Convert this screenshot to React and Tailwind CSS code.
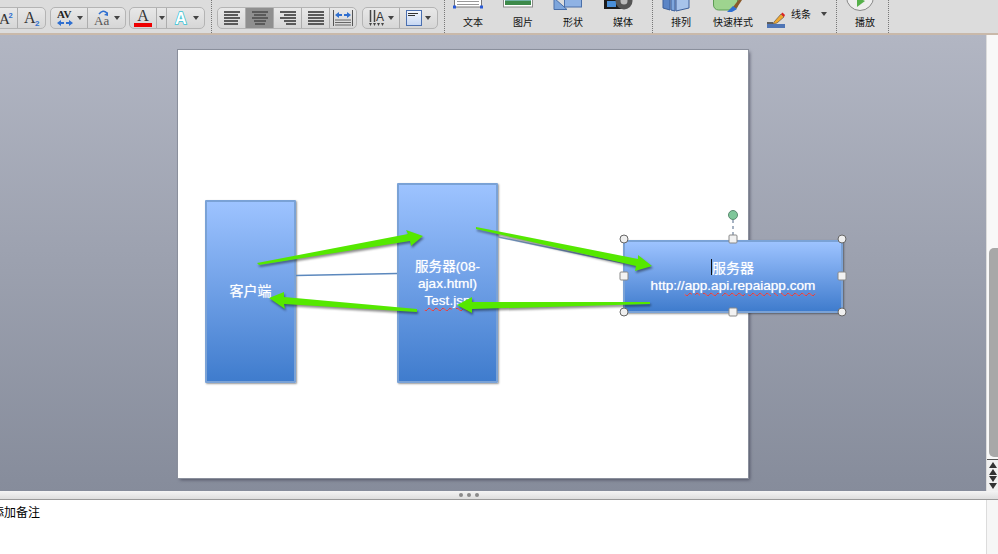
import React from 'react';

// one segmented button in the ribbon
const Seg = ({ w, active, children }) => (
    <div className={`flex h-full shrink-0 items-center justify-center border-r border-[#adadad] last:border-r-0 ${active ? 'bg-[#8f8f8f]' : ''}`} style={{ width: w }}>
        {children}
    </div>
);

const Group = ({ children, className = '' }) => (
    <div className={`mt-[7px] flex h-[22px] shrink-0 items-center overflow-hidden rounded-[5px] border border-[#b4b4b4] bg-gradient-to-b from-[#e8e8e8] to-[#d6d6d6] ${className}`}>
        {children}
    </div>
);

const Caret = ({ className = 'ml-[3px]' }) => <span className={`h-0 w-0 border-x-[3px] border-t-[4px] border-x-transparent border-t-[#444] ${className}`}></span>;

const Sep = ({ className = '' }) => <div className={`h-[33px] w-0 shrink-0 border-l border-dotted border-[#777] ${className}`}></div>;

// little text lines used by the paragraph buttons
const Lines = ({ rows, align }) => (
    <div className={`flex w-[16px] flex-col gap-[1px] ${align}`}>
        {rows.map((r, i) => (
            <div key={i} className="h-[2px] bg-[#5a5a5a]" style={{ width: r }}></div>
        ))}
    </div>
);

const DoubleArrow = ({ x, y }) => (
    <g fill="#2f6fd0">
        <path d={`M${x} ${y}l4-3v2h3v2h-3v2z`} />
        <path d={`M${x + 16} ${y}l-4-3v2h-3v2h3v2z`} />
    </g>
);

// icon is cropped by the window top, and sits 5px left of its label
const InsertItem = ({ w, label, children }) => (
    <div className="flex h-[33px] shrink-0 flex-col items-center" style={{ width: w }}>
        <div className="flex h-[15px] w-full items-start justify-center overflow-hidden pr-[10px]">{children}</div>
        <div className="text-[10px] leading-[14px] text-[#111]">{label}</div>
    </div>
);

const Toolbar = () => (
    <div className="flex h-[33px] shrink-0 items-start overflow-hidden bg-[#dcdcdc] font-['Liberation_Serif','Noto_Sans_CJK_SC',serif]">
        <Group className="-ml-px w-[47px] rounded-l-none">
            <Seg w={18}>
                <svg width="18" height="20" viewBox="0 0 18 20">
                    <text x="-1" y="16" fontSize="16" fill="#333">A</text>
                    <text x="9" y="10" fontSize="8" fontWeight="bold" fill="#2f6fd0" fontFamily="Liberation Sans">2</text>
                </svg>
            </Seg>
            <Seg w={27}>
                <svg width="27" height="20" viewBox="0 0 27 20">
                    <text x="6" y="15" fontSize="16" fill="#333">A</text>
                    <text x="17" y="18" fontSize="8" fontWeight="bold" fill="#2f6fd0" fontFamily="Liberation Sans">2</text>
                </svg>
            </Seg>
        </Group>
        <Group className="ml-[4px] w-[76px]">
            <Seg w={37}>
                <svg width="18" height="20" viewBox="0 0 18 20">
                    <text x="1" y="10" fontSize="11" fontWeight="bold" fill="#222">AV</text>
                    <DoubleArrow x={1} y={15} />
                </svg>
                <Caret />
            </Seg>
            <Seg w={37}>
                <svg width="18" height="20" viewBox="0 0 18 20">
                    <text x="1" y="17" fontSize="13" fill="#555">Aa</text>
                    <path d="M6 6q4-5 8-1" fill="none" stroke="#2f6fd0" strokeWidth="1.5" />
                    <path d="M15 8l-4-1 4-3z" fill="#2f6fd0" />
                </svg>
                <Caret />
            </Seg>
        </Group>
        <Group className="ml-[3px] w-[76px]">
            <Seg w={27}>
                <div className="flex flex-col items-center">
                    <span className="text-[16px] leading-[13px] text-[#333]">A</span>
                    <div className="mt-[1px] h-[4px] w-[18px] bg-[#ee0000]"></div>
                </div>
            </Seg>
            <Seg w={10}>
                <Caret className="" />
            </Seg>
            <Seg w={37}>
                <svg width="17" height="18" viewBox="0 0 17 18">
                    <text x="2" y="15" fontSize="16" fontWeight="bold" fontFamily="Liberation Sans" fill="#fff" stroke="#37c4d6" strokeWidth="1.5" paintOrder="stroke">A</text>
                </svg>
                <Caret />
            </Seg>
        </Group>
        <Sep className="ml-[6px]" />
        <Group className="ml-[5px] w-[140px]">
            <Seg w={28}><Lines rows={[16, 14, 16, 14, 14]} align="items-start" /></Seg>
            <Seg w={28} active><Lines rows={[16, 12, 16, 12, 10]} align="items-center" /></Seg>
            <Seg w={28}><Lines rows={[16, 12, 16, 12, 10]} align="items-end" /></Seg>
            <Seg w={28}><Lines rows={[16, 16, 16, 16, 16]} align="items-center" /></Seg>
            <Seg w={26}>
                <svg width="20" height="18" viewBox="0 0 20 18">
                    <path d="M0.5 1v16M19.5 1v16" stroke="#555" />
                    <DoubleArrow x={2} y={6} />
                    <path d="M2 11h16M2 13.5h16M2 16h16" stroke="#666" />
                </svg>
            </Seg>
        </Group>
        <Group className="ml-[5px] w-[76px]">
            <Seg w={37}>
                <svg width="17" height="20" viewBox="0 0 17 20">
                    <path d="M2.5 2v12M6.5 2v12" stroke="#444" strokeWidth="1.5" />
                    <text x="8" y="13" fontSize="12" fontFamily="Liberation Sans" fill="#333">A</text>
                    <path d="M1 15h3l-1.5 3zM5 15h3l-1.5 3zM9 15h3l-1.5 3zM13 15h3l-1.5 3z" fill="#444" />
                </svg>
                <Caret />
            </Seg>
            <Seg w={37}>
                <div className="flex h-[16px] w-[16px] flex-col gap-[1px] border border-[#4a6fb0] bg-gradient-to-b from-[#f4f7fd] to-[#c6d7f3] px-[1px] pt-[2px]">
                    <div className="h-px w-[10px] bg-[#333]"></div>
                    <div className="h-px w-[7px] bg-[#333]"></div>
                </div>
                <Caret />
            </Seg>
        </Group>
        <Sep className="ml-[6px]" />
        <div className="ml-[3px] flex font-['Noto_Sans_CJK_SC',sans-serif]">
            <InsertItem w={50} label="文本">
                <svg width="30" height="15" viewBox="0 0 30 15">
                    <rect x="1.5" y="-6" width="27" height="13" fill="#fff" stroke="#777" />
                    <path d="M4 1.5h22M4 4.5h22" stroke="#999" />
                    <rect x="0" y="5.5" width="3" height="3" fill="#2a5bd7" />
                    <rect x="27" y="5.5" width="3" height="3" fill="#2a5bd7" />
                </svg>
            </InsertItem>
            <InsertItem w={50} label="图片">
                <svg width="30" height="15" viewBox="0 0 30 15">
                    <rect x="0.5" y="-6" width="29" height="13" fill="#fff" stroke="#8a8a8a" />
                    <rect x="2" y="-4" width="26" height="9" fill="#3d8a4a" />
                    <rect x="2" y="-4" width="26" height="5" fill="#6fb1a4" />
                </svg>
            </InsertItem>
            <InsertItem w={50} label="形状">
                <svg width="30" height="15" viewBox="0 0 30 15">
                    <path d="M1 -2 L14 9.5 H1 Z" fill="#7ea6dc" stroke="#4a6fa8" />
                    <rect x="11.5" y="-4" width="17" height="11" fill="#8fb2e4" stroke="#4a6fa8" />
                </svg>
            </InsertItem>
            <InsertItem w={50} label="媒体">
                <svg width="30" height="15" viewBox="0 0 30 15">
                    <rect x="1" y="-2" width="18" height="11" fill="#1c1c1c" />
                    <rect x="4" y="1" width="9" height="6" fill="#4a8fd8" />
                    <circle cx="21" cy="1" r="8.5" fill="#555" />
                    <circle cx="21" cy="1" r="3.5" fill="#bbb" />
                </svg>
            </InsertItem>
        </div>
        <Sep className="ml-[4px]" />
        <div className="ml-[3px] flex font-['Noto_Sans_CJK_SC',sans-serif]">
            <InsertItem w={50} label="排列">
                <svg width="30" height="15" viewBox="0 0 30 15">
                    <path d="M2 -2 L9 -2 L9 10 L2 8Z" fill="#5b85c6" stroke="#3c5f9a" />
                    <path d="M10 -2 L14 -2 L14 11 L10 10Z" fill="#7ea6dc" stroke="#3c5f9a" />
                    <path d="M15 11 L28 8 L28 -2 L15 -2Z" fill="#a7c3ea" stroke="#3c5f9a" />
                </svg>
            </InsertItem>
            <InsertItem w={54} label="快速样式">
                <svg width="30" height="15" viewBox="0 0 30 15">
                    <rect x="0.5" y="-8" width="24" height="18" rx="5" fill="#9ed48f" stroke="#5d9c54" />
                    <path d="M20 7 L27 -2 L29 0 L23 9Z" fill="#8a5a2b" />
                    <path d="M14 12 L20 6 L24 9 L19 12Z" fill="#2f6fd0" />
                </svg>
            </InsertItem>
            <div className="ml-[7px] flex h-[28px] shrink-0 items-center">
                <svg className="self-end" width="18" height="20" viewBox="0 0 18 20">
                    <path d="M0 15 H6" stroke="#333" strokeWidth="1.5" />
                    <path d="M7 14 L14 6 L17 9 L10 15 L6 16Z" fill="#f0a830" stroke="#333" strokeWidth="0.5" />
                    <path d="M14 6 L15.5 4.5 L18 7 L17 9Z" fill="#d22" />
                    <rect x="0" y="16" width="18" height="4" fill="#4f75b5" />
                </svg>
                <span className="ml-[6px] text-[10px] leading-none text-[#111]">线条</span>
                <Caret className="ml-[10px]" />
            </div>
        </div>
        <Sep className="ml-[9px]" />
        <div className="ml-[3px] font-['Noto_Sans_CJK_SC',sans-serif]">
            <InsertItem w={50} label="播放">
                <svg width="30" height="15" viewBox="0 0 30 15">
                    <circle cx="15" cy="-3" r="13.5" fill="#eee" stroke="#888" />
                    <path d="M12 -3 L20 1 L12 7Z" fill="#55b04a" />
                </svg>
            </InsertItem>
        </div>
        <Sep className="-ml-[2px]" />
    </div>
);

const Arrow = ({ points }) => (
    <polygon points={points} fill="#55e800" className="drop-shadow-[1px_2px_1px_rgba(0,0,0,0.45)]" />
);

const Round = ({ x, y }) => <circle cx={x} cy={y} r="4" fill="#efefef" stroke="#666" />;
const Square = ({ x, y }) => <rect x={x - 4} y={y - 4} width="8" height="8" rx="1" fill="#f2f2f2" stroke="#888" />;

const boxStyle = "absolute flex items-center justify-center rounded-[1px] border-2 border-[#7aa2d6] bg-gradient-to-b from-[#9dc3ff] to-[#3f7ccd] text-center text-white shadow-[1px_1px_2px_rgba(0,0,0,0.4)] [text-shadow:0_0_1px_rgba(255,255,255,0.7)]";
const squiggle = 'underline decoration-wavy decoration-[#e02020] decoration-1 underline-offset-2';

const Slide = () => (
    <div className="relative mt-[15px] ml-[178px] h-[428px] w-[570px] bg-white shadow-[0_0_0_1px_#8a8f9c,2px_2px_3px_rgba(40,40,60,0.55)] font-['Liberation_Sans','Noto_Sans_CJK_SC',sans-serif]">
        {/* 客户端 */}
        <div className={`${boxStyle} top-[150px] left-[27px] h-[183px] w-[91px] text-[14px]`}>客户端</div>
        {/* 服务器 */}
        <div className={`${boxStyle} top-[133px] left-[219px] h-[200px] w-[101px] text-[13.6px] leading-[17px]`}>
            <div>
                服务器(08-<br />ajax.html)<br /><span className={squiggle}>Test.jsp</span>
            </div>
        </div>
        {/* selected box */}
        <div className={`${boxStyle} top-[190px] left-[445px] h-[73px] w-[220px] text-[13.6px] leading-[17px]`}>
            <div>
                <span className="text-[14px]">服务器</span><br />
                http://<span className={squiggle}>app.api.repaiapp.com</span>
            </div>
        </div>
        <svg className="absolute top-0 left-0 overflow-visible" width="570" height="428" viewBox="178 50 570 428">
            <line x1="296" y1="275.5" x2="397" y2="273.5" stroke="#5c88bd" strokeWidth="1.5" />
            <line x1="498" y1="237" x2="623" y2="263" stroke="#7d9fca" strokeWidth="1.5" />
            <Arrow points="257,263 408,234 406,230 423,236 411,246 410,241 259,265" />
            <Arrow points="476,227 638,259 638,255 652,266 635,271 636,266 476,229" />
            <Arrow points="417,309 417,312 284,304 285,309 269,298 284,292 284,297" />
            <Arrow points="650,302 650,304 472,309 472,313 457,305 472,297 472,302" />
            <line x1="711.5" y1="259" x2="711.5" y2="275" stroke="#111" />
            <line x1="733" y1="220" x2="733" y2="235" stroke="#8a9ab0" strokeWidth="1.5" strokeDasharray="3 3" />
            <circle cx="733" cy="215" r="4.5" fill="#7fc79a" stroke="#5a8a70" />
            <Round x={624} y={239} />
            <Round x={842} y={239} />
            <Round x={624} y={312} />
            <Round x={842} y={312} />
            <Square x={733} y={239} />
            <Square x={733} y={312} />
            <Square x={624} y={276} />
            <Square x={842} y={276} />
        </svg>
    </div>
);

const App = () => (
    <div className="flex h-[554px] w-[998px] flex-col overflow-hidden bg-white">
        <Toolbar />
        <div className="h-[2px] shrink-0 bg-[#c9b9aa]"></div>
        <div className="flex h-[456px] shrink-0">
            <div className="flex-1 bg-gradient-to-b from-[#b2b6c3] to-[#868c9b]">
                <Slide />
            </div>
            <div className="flex w-[12px] flex-col border-l border-[#dcdcdc] bg-[#f8f8f8]">
                <div className="flex-1 pt-[213px] pb-[2px] pl-[2px]">
                    <div className="h-full w-[9px] rounded-l-[5px] bg-[#a8a8a8]"></div>
                </div>
                <div className="flex h-[32px] flex-col items-center gap-[1px] border-t border-[#555] bg-[#f0f0f0] pt-[2px]">
                    <span className="h-0 w-0 border-x-[4px] border-b-[6px] border-x-transparent border-b-[#333]"></span>
                    <span className="h-0 w-0 border-x-[4px] border-b-[6px] border-x-transparent border-b-[#333]"></span>
                    <span className="h-0 w-0 border-x-[4px] border-t-[6px] border-x-transparent border-t-[#333]"></span>
                    <span className="h-0 w-0 border-x-[4px] border-t-[6px] border-x-transparent border-t-[#333]"></span>
                </div>
            </div>
        </div>
        <div className="flex h-[9px] shrink-0 items-center gap-[4px] border-b border-[#9a9a9a] bg-gradient-to-b from-[#f4f4f4] to-[#dedede] pl-[459px]">
            <span className="h-[4px] w-[4px] rounded-full bg-[#8a8a8a]"></span>
            <span className="h-[4px] w-[4px] rounded-full bg-[#8a8a8a]"></span>
            <span className="h-[4px] w-[4px] rounded-full bg-[#8a8a8a]"></span>
        </div>
        <div className="flex flex-1">
            <div className="flex-1 overflow-hidden pt-[4px] font-['Noto_Sans_CJK_SC',sans-serif] text-[12px] leading-[16px] text-black">
                <div className="-ml-[8px]">添加备注</div>
            </div>
            <div className="w-[12px] border-l border-[#dcdcdc] bg-[#f6f6f6]"></div>
        </div>
    </div>
);

export default App;
